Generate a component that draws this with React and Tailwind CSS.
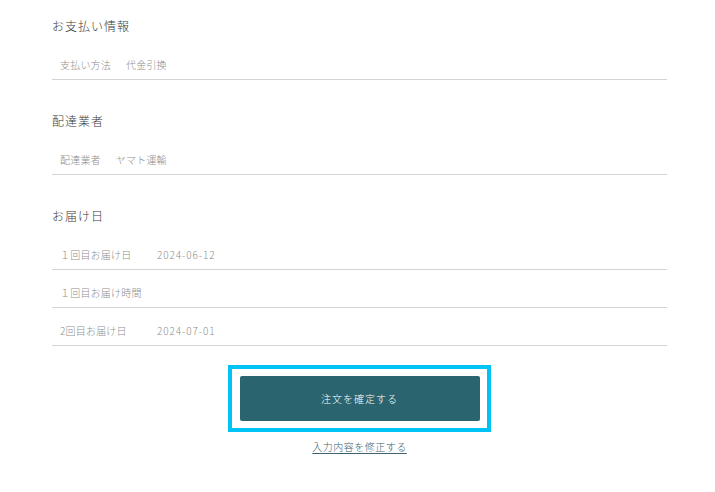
import React from "react";

const font = { fontFamily: '"Noto Sans CJK JP", "Noto Sans", sans-serif' };

function Heading({ children, className = "" }) {
  return (
    <h2 className={`text-[12px] leading-[18px] tracking-[1px] text-[#3a3a3a] font-light mb-[7px] ${className}`}>
      {children}
    </h2>
  );
}

function Row({ label, value, labelWidth }) {
  return (
    <div className="flex items-center h-[38px] pt-[17px] pb-[8px] border-b border-[#d4d4d4] pl-[8px] text-[10px] leading-[12px] tracking-[0.2px] text-[#8e8e8e] font-light">
      <span className={labelWidth ? "w-[97px] shrink-0" : "mr-[15px]"}>{label}</span>
      {value && <span className={labelWidth ? "tracking-[0.9px]" : ""}>{value}</span>}
    </div>
  );
}

export default function App() {
  return (
    <div className="w-[715px] h-[492px] bg-white" style={font}>
      <div className="ml-[52px] w-[615px] pt-[17px]">
        <Heading>お支払い情報</Heading>
        <Row label="支払い方法" value="代金引換" />

        <Heading className="mt-[32px]">配達業者</Heading>
        <Row label="配達業者" value="ヤマト運輸" />

        <Heading className="mt-[32px]">お届け日</Heading>
        <Row label="１回目お届け日" value="2024-06-12" labelWidth />
        <Row label="１回目お届け時間" labelWidth />
        <Row label="2回目お届け日" value="2024-07-01" labelWidth />

        <div className="flex flex-col items-center mt-[19px]">
          <div className="w-[263px] h-[67px] border-[4px] border-[#00c2f5] flex items-center justify-center">
            <button className="w-[240px] h-[45px] rounded-[2px] bg-[#29646f] text-white text-[10px] tracking-[1px] font-light">
              注文を確定する
            </button>
          </div>
          <a className="mt-[8px] text-[10px] leading-[14px] tracking-[0.5px] text-[#3d6272] underline underline-offset-[2px] font-light">
            入力内容を修正する
          </a>
        </div>
      </div>
    </div>
  );
}
